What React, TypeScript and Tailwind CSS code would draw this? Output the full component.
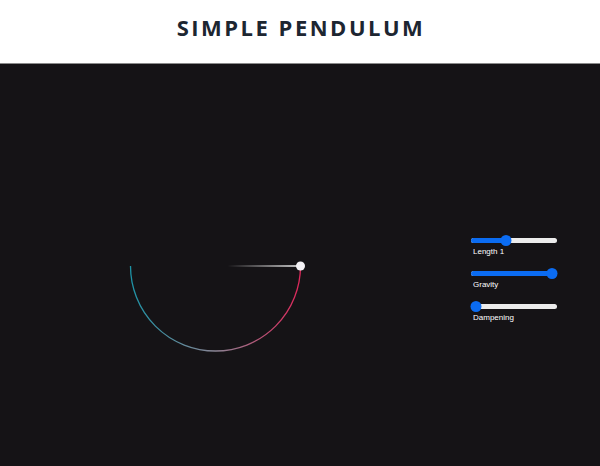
import React from 'react';

// Pendulum geometry in the stage's own coordinates
const pivot = { x: 215.5, y: 202 };
const radius = 85;

const controls = [
  { label: 'Length 1', value: 41 },
  { label: 'Gravity', value: 94 },
  { label: 'Dampening', value: 6 },
];

function Slider({ value }: { value: number }) {
  return (
    <div className="relative h-[12px] w-[86px] flex items-center">
      <div className="h-[5px] w-full rounded-full bg-[#ececec] overflow-hidden">
        <div className="h-full bg-[#0b6cf2]" style={{ width: `${value}%` }} />
      </div>
      <div
        className="absolute top-[0.5px] h-[11px] w-[11px] rounded-full bg-[#0b6cf2] -translate-x-1/2"
        style={{ left: `${value}%` }}
      />
    </div>
  );
}

function Pendulum() {
  const bob = { x: pivot.x + radius, y: pivot.y };
  return (
    <svg className="absolute inset-0" width="600" height="402" viewBox="0 0 600 402">
      <defs>
        <linearGradient id="trail" x1="130" y1="0" x2="301" y2="0" gradientUnits="userSpaceOnUse">
          <stop offset="0" stopColor="#1c93a6" />
          <stop offset="0.5" stopColor="#8a8494" />
          <stop offset="1" stopColor="#e0265a" />
        </linearGradient>
        <linearGradient id="rod" x1={pivot.x + 12} y1="0" x2={bob.x} y2="0" gradientUnits="userSpaceOnUse">
          <stop offset="0" stopColor="#ffffff" stopOpacity="0" />
          <stop offset="1" stopColor="#ffffff" stopOpacity="1" />
        </linearGradient>
      </defs>
      <path
        d={`M ${pivot.x - radius} ${pivot.y} A ${radius} ${radius} 0 0 0 ${bob.x} ${bob.y}`}
        fill="none"
        stroke="url(#trail)"
        strokeWidth="1.3"
      />
      <line x1={pivot.x + 12} y1={pivot.y} x2={bob.x} y2={bob.y} stroke="url(#rod)" strokeWidth="1.3" />
      <circle cx={bob.x} cy={bob.y} r="4.5" fill="#f4f2f6" />
    </svg>
  );
}

export default function App() {
  return (
    <div className="w-[600px] h-[466px] flex flex-col bg-[#151316] overflow-hidden">
      <header className="h-[64px] shrink-0 bg-white border-b border-[#8a8a8a] flex items-center justify-center">
        <h1
          className="text-[22px] font-bold tracking-[2.5px] text-[#1d2631] leading-none pb-[10px] pl-[2px]"
          style={{ fontFamily: '"Open Sans", "Noto Sans", sans-serif' }}
        >
          SIMPLE PENDULUM
        </h1>
      </header>

      <main className="relative flex-1 flex items-center justify-end pr-[43px]">
        <Pendulum />
        <div className="relative flex flex-col gap-[10px] mt-[27px]" style={{ fontFamily: '"Liberation Sans", Arial, sans-serif' }}>
          {controls.map((c) => (
            <div key={c.label} className="flex flex-col">
              <Slider value={c.value} />
              <span className="text-[8px] leading-[11px] text-white pl-[2px]">{c.label}</span>
            </div>
          ))}
        </div>
      </main>
    </div>
  );
}
